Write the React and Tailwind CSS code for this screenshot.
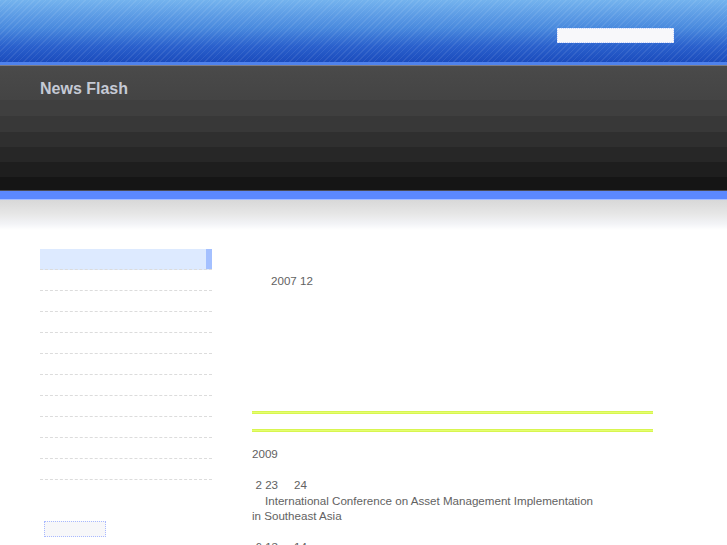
// News Flash page: striped blue masthead, dark banded strip, side menu and news column.
export default function App() {
  const menu = Array.from({ length: 11 }, (_, i) => i)

  return (
    <div className="min-h-screen bg-white font-['Liberation_Sans',Arial,sans-serif] text-[#626262]">
      {/* masthead */}
      <div className="h-[62px] flex justify-end pt-[28px] pr-[53px] bg-[image:repeating-linear-gradient(135deg,rgba(255,255,255,0.08)_0_1px,transparent_1px_4px),linear-gradient(to_bottom,#74b3ee,#4a8ade_45%,#2a60cc_75%,#1b4cbd)]">
        <div className="w-[117px] h-[15px] border border-dotted border-[#c9d5ff] bg-[#f8f8fa]" />
      </div>
      <div className="h-[3px] bg-[#4f82ec]" />
      <div className="h-px bg-[#7c7c84]" />

      {/* dark strip */}
      <div className="h-[124px] pl-[40px] pt-[13px] bg-[image:linear-gradient(to_bottom,#4a4a4a_0px,#444444_34px,#3f3f3f_34px,#3f3f3f_50px,#383838_50px,#383838_66px,#2f2f2f_66px,#2f2f2f_81px,#272727_81px,#272727_96px,#1e1e1e_96px,#1e1e1e_111px,#151515_111px,#151515_124px)]">
        <h1 className="text-[16px] leading-[20px] font-bold text-[#c5cad5]">News Flash</h1>
      </div>
      <div className="h-px bg-[#4a4a55]" />
      <div className="h-[8px] bg-[#5b88ff]" />
      <div className="h-px bg-[#a6bdff]" />
      <div className="h-[30px] bg-[image:linear-gradient(to_bottom,#d8d8d8,#e6e6e6_45%,#f3f4f7_80%,#ffffff)]" />

      {/* body */}
      <div className="flex pt-[19px] pl-[40px] gap-[40px]">
        <aside className="w-[172px] shrink-0">
          {menu.map((i) => (
            <div
              key={i}
              className={`h-[21px] border-b border-dashed border-[#dcdcdc] flex justify-end ${i === 0 ? 'bg-[#ddeaff]' : ''}`}
            >
              {i === 0 && <div className="w-[6px] bg-[#a4c0ff]" />}
            </div>
          ))}
          <div className="mt-[41px] ml-[4px] w-[62px] h-[16px] border border-dotted border-[#a9b9ff] bg-[#f7f7f9]" />
        </aside>

        <main className="w-[401px] text-[11.6px] leading-[15.5px]">
          <p className="pt-[24px] pl-[19px]">2007 12</p>

          <div className="mt-[122px] h-[3px] border-y border-[#d8f550] bg-[#e4ff70]" />
          <div className="mt-[15px] h-[3px] border-y border-[#d8f550] bg-[#e4ff70]" />

          <div className="mt-[14.5px]">
            <p>2009</p>
            <p>&nbsp;</p>
            <p className="pl-[3.5px]">
              2 23<span className="ml-[16px]">24</span>
            </p>
            <p>
              <span className="pl-[13px]">International Conference on Asset Management Implementation</span>
              <br />
              in Southeast Asia
            </p>
            <p>&nbsp;</p>
            <p className="pl-[3.5px]">
              6 13<span className="ml-[16px]">14</span>
            </p>
            <p>&nbsp;</p>
          </div>
        </main>
      </div>
    </div>
  )
}
